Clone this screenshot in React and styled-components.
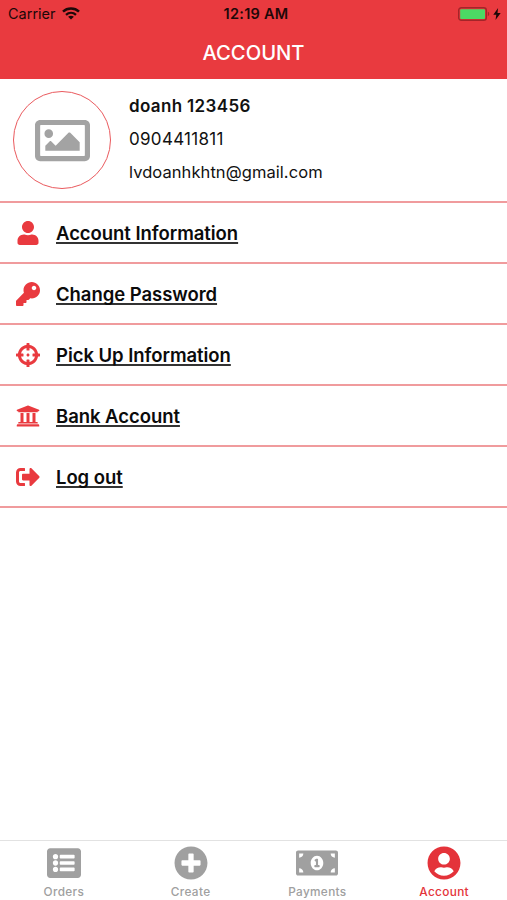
import { useState } from "react";
import styled, { createGlobalStyle } from "styled-components";

import {
    FaRegImage,
    FaUser,
    FaKey,
    FaCrosshairs,
    FaUniversity,
    FaSignOutAlt,
    FaListAlt,
    FaPlusCircle,
    FaMoneyBillAlt,
    FaUserCircle
} from "react-icons/fa";

const links = [
    { label: "Account Information", icon: FaUser },
    { label: "Change Password", icon: FaKey },
    { label: "Pick Up Information", icon: FaCrosshairs },
    { label: "Bank Account", icon: FaUniversity },
    { label: "Log out", icon: FaSignOutAlt }
];

const tabs = [
    { label: "Orders", icon: FaListAlt },
    { label: "Create", icon: FaPlusCircle },
    { label: "Payments", icon: FaMoneyBillAlt },
    { label: "Account", icon: FaUserCircle }
];

const App = () => {
    const [active, setActive] = useState("Account");

    return (
        <Screen>
            <GlobalStyles/>
            <Header>
                <StatusBar>
                    <Carrier>
                        Carrier
                        <Wifi viewBox="0 0 18 13">
                            <path d="M1 4.6C5.4.5 12.6.5 17 4.6" strokeWidth="2.5"/>
                            <path d="M4 7.9c2.9-2.6 7.1-2.6 10 0" strokeWidth="2.3"/>
                            <path d="M9 12.6 6.1 9.8c1.7-1.4 4.1-1.4 5.8 0z" stroke="none" fill="#1d0808"/>
                        </Wifi>
                    </Carrier>
                    <Clock>12:19 AM</Clock>
                    <Power>
                        <Battery viewBox="0 0 32 14">
                            <rect x=".7" y=".7" width="27.6" height="12.6" rx="2.6" fill="none" stroke="#a32529" strokeWidth="1.4"/>
                            <rect x="2.2" y="2.2" width="24.8" height="9.8" rx="1" fill="#4cd964"/>
                            <path d="M29.8 4.8c1.9.5 1.9 3.9 0 4.4z" fill="#a32529"/>
                        </Battery>
                        <Bolt viewBox="0 0 8 12">
                            <path d="M5.1 0 .3 6.7h3L2.5 12l5.2-7.1H4.5z"/>
                        </Bolt>
                    </Power>
                </StatusBar>
                <Title>ACCOUNT</Title>
            </Header>

            <Profile>
                <Avatar><FaRegImage/></Avatar>
                <Details>
                    <Name>doanh 123456</Name>
                    <Phone>0904411811</Phone>
                    <Email>lvdoanhkhtn@gmail.com</Email>
                </Details>
            </Profile>

            <Menu>
                {links.map(({ label, icon: Icon }) => (
                    <MenuRow key={label}>
                        <Icon/>
                        <MenuLabel>{label}</MenuLabel>
                    </MenuRow>
                ))}
            </Menu>

            <TabBar>
                {tabs.map(({ label, icon: Icon }) => (
                    <Tab key={label} $active={label === active} onClick={() => setActive(label)}>
                        <Icon/>
                        <TabLabel>{label}</TabLabel>
                    </Tab>
                ))}
            </TabBar>
        </Screen>
    );
}

const GlobalStyles = createGlobalStyle`
    * {
        box-sizing: border-box;
    }
    body {
        margin: 0;
        background: #fff;
        font-family: Inter, "Liberation Sans", sans-serif;
    }
`;
const Screen = styled.div`
    display: flex;
    flex-direction: column;
    width: 100%;
    height: 100vh;
    overflow: hidden;
`;
const Header = styled.header`
    height: 79px;
    flex-shrink: 0;
    background: #e93a3f;
`;
const StatusBar = styled.div`
    display: grid;
    grid-template-columns: 1fr auto 1fr;
    align-items: center;
    height: 27px;
    padding: 0 6px 0 8px;
    color: #1d0808;
    font-size: 14.5px;
`;
const Carrier = styled.div`
    display: flex;
    align-items: center;
    gap: 6px;
`;
const Wifi = styled.svg`
    width: 18px;
    height: 13px;
    fill: none;
    stroke: #1d0808;
`;
const Clock = styled.div`
    font-weight: 600;
    letter-spacing: .25px;
    padding-left: 3px;
`;
const Power = styled.div`
    display: flex;
    justify-content: flex-end;
    align-items: center;
    gap: 3px;
`;
const Battery = styled.svg`
    width: 32px;
    height: 14px;
`;
const Bolt = styled.svg`
    width: 8px;
    height: 12px;
    fill: #1d0808;
`;
const Title = styled.h1`
    margin: 0;
    color: #fff;
    font-size: 20.2px;
    font-weight: 500;
    line-height: 51px;
    text-align: center;
`;
const Profile = styled.section`
    display: flex;
    height: 124px;
    flex-shrink: 0;
    padding: 12px 13px;
    border-bottom: 2px solid #f09b9d;
`;
const Avatar = styled.div`
    display: flex;
    justify-content: center;
    align-items: center;
    width: 98px;
    height: 98px;
    border: 1px solid #ea5a5e;
    border-radius: 50%;
    color: #a3a3a3;
    font-size: 55px;
`;
const Details = styled.div`
    margin: -1px 0 0 18px;
    color: #111;
    font-size: 16.5px;
    line-height: 33px;
`;
const Name = styled.div`
    font-size: 17px;
    font-weight: 600;
    letter-spacing: .35px;
`;
const Phone = styled.div`
    font-size: 17px;
    letter-spacing: .3px;
`;
const Email = styled.div`
    letter-spacing: .07px;
`;
const Menu = styled.nav`
    flex: 1;
`;
const MenuRow = styled.div`
    display: flex;
    align-items: center;
    gap: 16px;
    height: 61px;
    padding: 1px 0 0 16px;
    border-bottom: 2px solid #f09b9d;
    color: #e93a3f;
    font-size: 24px;
    cursor: pointer;
    svg {
        width: 24px;
    }
`;
const MenuLabel = styled.span`
    color: #0b0b0b;
    font-size: 18.5px;
    font-weight: 600;
    letter-spacing: -.05px;
    line-height: 22px;
    text-decoration: underline;
    text-decoration-color: #333;
    text-decoration-thickness: 1.5px;
    text-underline-offset: 1.5px;
    text-decoration-skip-ink: none;
`;
const TabBar = styled.footer`
    display: flex;
    height: 60px;
    flex-shrink: 0;
    border-top: 1px solid #e2e2e2;
`;
const Tab = styled.div`
    display: flex;
    flex: 1;
    flex-direction: column;
    align-items: center;
    padding: 5px 0 0 1px;
    color: ${({ $active }) => $active ? "#e4333a" : "#a0a0a0"};
    cursor: pointer;
    svg {
        width: 42px;
        height: 34px;
    }
`;
const TabLabel = styled.span`
    margin-top: 4px;
    font-size: 11.8px;
    font-weight: 500;
    line-height: 16px;
    letter-spacing: .35px;
`;
export default App;
